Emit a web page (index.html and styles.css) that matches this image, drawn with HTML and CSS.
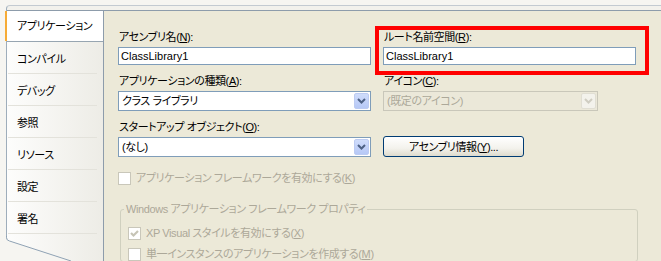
FILE: index.html
```html
<!DOCTYPE html>
<html lang="ja">
<head>
  <meta charset="UTF-8">
  <title>アプリケーション</title>
  <link rel="stylesheet" href="styles.css">
</head>
<body>
  <div class="frame">
    <div class="strip">
      <!-- Tab list -->
      <div class="tabs">
        <div class="tab active">アプリケーション</div>
        <div class="tab">コンパイル</div>
        <div class="tab">デバッグ</div>
        <div class="tab">参照</div>
        <div class="tab">リソース</div>
        <div class="tab">設定</div>
        <div class="tab">署名</div>
      </div>

      <!-- Application page -->
      <div class="page">
        <div class="fields">
          <div class="field">
            <div class="label">アセンブリ名(<u>N</u>):</div>
            <div class="input">ClassLibrary1</div>
          </div>
          <div class="field marked">
            <div class="label">ルート名前空間(<u>R</u>):</div>
            <div class="input">ClassLibrary1</div>
          </div>

          <div class="field">
            <div class="label">アプリケーションの種類(<u>A</u>):</div>
            <div class="combo">
              <span>クラス ライブラリ</span>
              <span class="combo-btn">
                <svg width="9" height="6" viewBox="0 0 9 6"><polyline points="1,1 4.5,4.5 8,1" fill="none" stroke="#4d6185" stroke-width="2"/></svg>
              </span>
            </div>
          </div>
          <div class="field">
            <div class="label">アイコン(<u>C</u>):</div>
            <div class="combo combo-off">
              <span>(既定のアイコン)</span>
              <span class="combo-btn">
                <svg width="9" height="6" viewBox="0 0 9 6"><polyline points="1,1 4.5,4.5 8,1" fill="none" stroke="#cfcdc2" stroke-width="2"/></svg>
              </span>
            </div>
          </div>

          <div class="field">
            <div class="label">スタートアップ オブジェクト(<u>O</u>):</div>
            <div class="combo">
              <span>(なし)</span>
              <span class="combo-btn">
                <svg width="9" height="6" viewBox="0 0 9 6"><polyline points="1,1 4.5,4.5 8,1" fill="none" stroke="#4d6185" stroke-width="2"/></svg>
              </span>
            </div>
          </div>
          <div class="field field-end">
            <div class="button">アセンブリ情報(<u>Y</u>)...</div>
          </div>
        </div>

        <div class="check-row top-check">
          <span class="checkbox"></span>
          <span class="off">アプリケーション フレームワークを有効にする(<u>K</u>)</span>
        </div>

        <fieldset class="group">
          <legend>Windows アプリケーション フレームワーク プロパティ</legend>
          <div class="check-row">
            <span class="checkbox">
              <svg width="11" height="11" viewBox="0 0 11 11"><polyline points="2,5 4.5,7.5 9,3" fill="none" stroke="#c6c4b6" stroke-width="2.2"/></svg>
            </span>
            <span class="off">XP Visual スタイルを有効にする(<u>X</u>)</span>
          </div>
          <div class="check-row">
            <span class="checkbox"></span>
            <span class="off">単一インスタンスのアプリケーションを作成する(<u>M</u>)</span>
          </div>
        </fieldset>
      </div>
    </div>

    <!-- slanted bottom edge of the tab list -->
    <svg class="tab-foot" width="104" height="25" viewBox="0 0 104 25">
      <path d="M0 0 H6.5 V1.5 Q6.5 4.5 9.5 5 L72 25 H0 Z" fill="#f6f5f1"/>
      <path d="M6.5 0 V1.5 Q6.5 4.5 9.5 5 L71 25" fill="none" stroke="#8fa2b4" stroke-width="1"/>
    </svg>
  </div>
</body>
</html>
```

FILE: styles.css
```css
* {
  margin: 0;
  padding: 0;
  box-sizing: border-box;
}

body {
  font-family: "Liberation Sans", "Noto Sans CJK JP", sans-serif;
  font-size: 11px;
  font-feature-settings: "palt";
  letter-spacing: -0.4px;
  line-height: 14px;
  color: #000;
  background-color: #f6f5f1;
  overflow: hidden;
}

u {
  text-decoration: underline;
  text-underline-offset: 1px;
}

/* Outer frame */
.frame {
  position: relative;
  display: flex;
  flex-direction: column;
  height: 256px;
  margin: 5px 0 0 6px;
  padding-top: 4px;
  border-top: 1px solid #c3cad1;
  border-left: 1px solid #9eadbb;
  border-top-left-radius: 4px;
  background-color: #f2f1ec;
}

.strip {
  flex: 1;
  display: flex;
  border-top: 1px solid #8d9cab;
}

/* Tabs */
.tabs {
  width: 96px;
  background: linear-gradient(to right, #fdfdfc, #edece6);
}

.tab {
  position: relative;
  height: 32px;
  padding: 10px 0 0 10px;
  white-space: nowrap;
}

.tab:after {
  content: "";
  position: absolute;
  left: 1px;
  right: 6px;
  bottom: 0;
  height: 1px;
  background-color: #e3e2db;
}

.tab.active {
  height: 31px;
  padding-top: 8px;
  background-color: #fff;
  border-bottom: 1px solid #97a5b1;
}

.tab.active:after {
  display: none;
}

.tab.active:before {
  content: "";
  position: absolute;
  left: -2px;
  top: 0;
  bottom: 0;
  width: 2px;
  background-color: #f6ab36;
}

.tab-foot {
  position: absolute;
  left: -7px;
  top: 230px;
}

/* Page */
.page {
  flex: 1;
  border-left: 1px solid #8d9cab;
  background-color: #ece9d8;
  padding: 19px 0 0 14px;
}

.fields {
  display: grid;
  grid-template-columns: 253px 253px;
  column-gap: 12px;
  row-gap: 9px;
}

.field {
  display: flex;
  flex-direction: column;
  gap: 3px;
}

.field-end {
  justify-content: flex-end;
}

.label {
  height: 14px;
  padding-left: 1px;
  white-space: nowrap;
}

.marked {
  position: relative;
}

.marked:after {
  content: "";
  position: absolute;
  left: -8px;
  top: -4px;
  right: -13px;
  bottom: -10px;
  border: 4px solid #ff0000;
}

.input {
  height: 18px;
  padding: 1px 2px 0;
  border: 1px solid #7f9db9;
  background-color: #fff;
  font-size: 11px;
  letter-spacing: 0;
}

.combo {
  display: flex;
  align-items: center;
  height: 20px;
  padding-left: 3px;
  border: 1px solid #7f9db9;
  background-color: #fff;
}

.combo-btn {
  display: flex;
  align-items: center;
  justify-content: center;
  width: 15px;
  height: 16px;
  margin: 0 1px 0 auto;
  border: 1px solid #bccbf2;
  border-radius: 2px;
  background: linear-gradient(#cfdcfb, #b6c8f6);
}

.combo-off {
  width: 215px;
  border-color: #c9c7ba;
  background-color: #ebe8d9;
  color: #aca899;
}

.combo-off .combo-btn {
  border-color: #e0ded3;
  background: #f3f2ec;
}

.button {
  width: 141px;
  height: 21px;
  padding-top: 3px;
  text-align: center;
  border: 1px solid #003c74;
  border-radius: 3px;
  background: linear-gradient(#ffffff, #f3f2ec 60%, #dedbcd);
}

/* Checkboxes */
.check-row {
  display: flex;
  align-items: center;
  gap: 5px;
  height: 14px;
  white-space: nowrap;
}

.top-check {
  margin-top: 14px;
}

.checkbox {
  display: flex;
  align-items: center;
  justify-content: center;
  width: 13px;
  height: 13px;
  border: 1px solid #c9c7ba;
  background-color: #fff;
}

.off {
  color: #aca899;
}

/* Group box */
.group {
  width: 518px;
  margin: 17px 0 0 2px;
  padding: 10px 0 0 7px;
  border: 1px solid #d0d0bf;
  border-radius: 3px;
  display: flex;
  flex-direction: column;
  gap: 7px;
}

.group legend {
  margin-left: -4px;
  padding: 0 2px;
  color: #aca899;
  line-height: 14px;
}
```
